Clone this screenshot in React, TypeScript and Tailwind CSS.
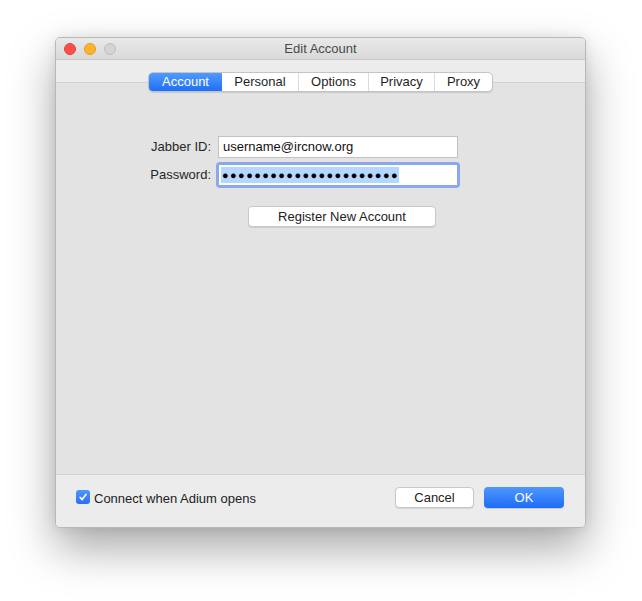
import React from "react";

const font = { fontFamily: '"Liberation Sans", Arial, sans-serif' };

export default function App() {
  const tabs = ["Account", "Personal", "Options", "Privacy", "Proxy"];
  const widths = ["w-[73px]", "w-[76px]", "w-[70px]", "w-[66px]", "w-[58px]"];
  return (
    <div className="w-[642px] h-[601px] bg-white pt-[37px] pl-[55px]" style={font}>
      <div className="w-[531px] h-[491px] flex flex-col rounded-[5px] overflow-hidden border border-[#b8b8b8] shadow-[0_20px_45px_rgba(0,0,0,0.35),0_0_12px_rgba(0,0,0,0.08)] bg-[#ececec]">
        {/* title bar */}
        <div className="h-[22px] shrink-0 flex items-center relative bg-gradient-to-b from-[#e9e9e9] to-[#d9d9d9] border-b border-[#c9c9c9]">
          <div className="flex items-center gap-[8px] pl-[8px]">
            <span className="w-[12px] h-[12px] rounded-full bg-[#fd4e4a] border border-[#e0443f]" />
            <span className="w-[12px] h-[12px] rounded-full bg-[#fdb428] border border-[#df9e22]" />
            <span className="w-[12px] h-[12px] rounded-full bg-[#d4d4d4] border border-[#bdbdbd]" />
          </div>
          <div className="absolute inset-0 flex items-center justify-center text-[13px] text-[#4a4a4a] pointer-events-none">
            Edit Account
          </div>
        </div>
        <div className="h-[22px] shrink-0 bg-[#ececec]" />
        {/* tab box */}
        <div className="flex-1 bg-[#e3e3e3] border-t border-b border-[#d3d3d3] flex flex-col">
          <div className="flex justify-center -mt-[11px]">
            <div className="flex h-[20px] rounded-[5px] bg-white border border-[#c4c4c4] shadow-[0_1px_1px_rgba(0,0,0,0.12)] overflow-hidden text-[13px] text-[#1e1e1e]">
              {tabs.map((t, i) => (
                <div
                  key={t}
                  className={
                    widths[i] +
                    " flex items-center justify-center " +
                    (i === 0
                      ? "bg-gradient-to-b from-[#4f9bfd] to-[#1f6ef8] text-white"
                      : "border-l border-[#dcdcdc]") +
                    (i === 1 ? " border-l-0" : "")
                  }
                >
                  {t}
                </div>
              ))}
            </div>
          </div>
          {/* form */}
          <div className="mt-[44px] flex flex-col text-[13px] text-[#262626]">
            <div className="flex items-center h-[22px]">
              <div className="w-[162px] text-right pr-[7px]">Jabber ID:</div>
              <div className="w-[240px] h-[22px] bg-white border border-[#c2c2c2] flex items-center pl-[4px] text-[#111]">
                username@ircnow.org
              </div>
            </div>
            <div className="flex items-center h-[26px] mt-[4px]">
              <div className="w-[162px] text-right pr-[7px]">Password:</div>
              <div className="-ml-[2px] w-[244px] h-[26px] rounded-[4px] bg-[#8aa7ef] p-[3px]">
                <div className="w-full h-full bg-white flex items-center pl-[2px]">
                  <span className="bg-[#b3d7ff] h-[16px] flex items-center text-[11px] tracking-[1.4px] text-black leading-none pl-[1px]">
                    ●●●●●●●●●●●●●●●●●●●●●●
                  </span>
                </div>
              </div>
            </div>
            <div className="flex mt-[18px] pl-[192px]">
              <div className="w-[188px] h-[21px] rounded-[4px] bg-white border border-[#c8c8c8] shadow-[0_1px_1px_rgba(0,0,0,0.1)] flex items-center justify-center text-[13px] text-[#222]">
                Register New Account
              </div>
            </div>
          </div>
        </div>
        {/* footer */}
        <div className="h-[52px] shrink-0 bg-[#ececec] flex items-start pt-[12px] pl-[20px] pr-[21px] text-[13px] text-[#222]">
          <div className="mt-[3px] w-[14px] h-[14px] rounded-[3px] bg-gradient-to-b from-[#4e96fc] to-[#2a6ff6] flex items-center justify-center">
            <svg width="10" height="10" viewBox="0 0 10 10">
              <path d="M2 5.3 L4.1 7.6 L8 2.4" fill="none" stroke="white" strokeWidth="1.6" strokeLinecap="round" strokeLinejoin="round" />
            </svg>
          </div>
          <span className="ml-[4px] mt-[2px]">Connect when Adium opens</span>
          <div className="flex-1" />
          <div className="w-[79px] h-[21px] rounded-[4px] bg-white border border-[#c8c8c8] shadow-[0_1px_1px_rgba(0,0,0,0.1)] flex items-center justify-center">
            Cancel
          </div>
          <div className="ml-[10px] w-[80px] h-[21px] rounded-[4px] bg-gradient-to-b from-[#4f97fd] to-[#1c6bf7] text-white flex items-center justify-center shadow-[0_1px_1px_rgba(0,0,0,0.15)]">
            OK
          </div>
        </div>
      </div>
    </div>
  );
}
